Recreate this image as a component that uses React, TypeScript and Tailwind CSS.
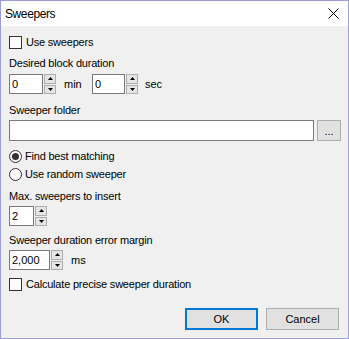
import React from "react";

const font = { fontFamily: '"Liberation Sans", Arial, sans-serif' };

function Spinner() {
  return (
    <div className="flex flex-col w-[12px] h-[20px] ml-[1px] gap-[1px]">
      <div className="flex-1 border border-[#adadad] bg-[#e5e5e5] flex items-center justify-center">
        <svg width="5" height="3" viewBox="0 0 5 3">
          <path d="M0 3 L2.5 0 L5 3 Z" fill="#000" />
        </svg>
      </div>
      <div className="flex-1 border border-[#adadad] bg-[#e5e5e5] flex items-center justify-center">
        <svg width="5" height="3" viewBox="0 0 5 3">
          <path d="M0 0 L2.5 3 L5 0 Z" fill="#000" />
        </svg>
      </div>
    </div>
  );
}

function NumInput({ w, value }: { w: string; value: string }) {
  return (
    <div className={`${w} h-[20px] border border-[#7a7a7a] bg-white flex items-center pl-[2px] text-[11px] text-black`}>
      {value}
    </div>
  );
}

function Checkbox({ label }: { label: string }) {
  return (
    <div className="flex items-center h-[13px]">
      <div className="w-[13px] h-[13px] border border-[#333333] bg-white" />
      <span className="ml-[4px] text-[11px] leading-[13px] tracking-[-0.2px]">{label}</span>
    </div>
  );
}

function Radio({ label, checked }: { label: string; checked?: boolean }) {
  return (
    <div className="flex items-center h-[13px]">
      <div className="w-[13px] h-[13px] rounded-full border border-[#333333] bg-white flex items-center justify-center">
        {checked && <div className="w-[7px] h-[7px] rounded-full bg-[#333333]" />}
      </div>
      <span className="ml-[3px] text-[11px] leading-[13px] tracking-[-0.2px]">{label}</span>
    </div>
  );
}

function Label({ children, className = "" }: { children: React.ReactNode; className?: string }) {
  return <div className={`text-[11px] leading-[13px] h-[13px] tracking-[-0.2px] ${className}`}>{children}</div>;
}

export default function App() {
  return (
    <div style={font} className="w-[349px] h-[339px] border border-[#9d9ddb] bg-[#f0f0f0] flex flex-col text-black">
      <div className="h-[25px] bg-white flex items-center justify-between pl-[4px] pr-[9px]">
        <span className="text-[12px] tracking-[-0.4px]">Sweepers</span>
        <svg width="11" height="11" viewBox="0 0 11 11">
          <path d="M0.5 0.5 L10.5 10.5 M10.5 0.5 L0.5 10.5" stroke="#000" strokeWidth="1" />
        </svg>
      </div>
      <div className="flex-1 flex flex-col pl-[8px] pr-[7px]">
        <div className="mt-[10px]">
          <Checkbox label="Use sweepers" />
        </div>
        <Label className="mt-[8px]">Desired block duration</Label>
        <div className="mt-[4px] flex items-center h-[20px]">
          <div className="w-[83px] flex items-center">
            <NumInput w="w-[34px]" value="0" />
            <Spinner />
            <span className="ml-[8px] text-[11px]">min</span>
          </div>
          <NumInput w="w-[33px]" value="0" />
          <Spinner />
          <span className="ml-[7px] text-[11px]">sec</span>
        </div>
        <Label className="mt-[10px]">Sweeper folder</Label>
        <div className="mt-[3px] flex h-[21px]">
          <div className="w-[305px] h-[21px] border border-[#7a7a7a] bg-white" />
          <div className="ml-[3px] w-[24px] h-[21px] border border-[#adadad] bg-[#e1e1e1] flex items-center justify-center text-[11px] leading-none pt-[1px]">
            ...
          </div>
        </div>
        <div className="mt-[9px]">
          <Radio label="Find best matching" checked />
        </div>
        <div className="mt-[5px]">
          <Radio label="Use random sweeper" />
        </div>
        <Label className="mt-[9px]">Max. sweepers to insert</Label>
        <div className="mt-[3px] flex items-center h-[20px]">
          <NumInput w="w-[25px]" value="2" />
          <Spinner />
        </div>
        <Label className="mt-[8px]">Sweeper duration error margin</Label>
        <div className="mt-[3px] flex items-center h-[20px]">
          <NumInput w="w-[41px]" value="2,000" />
          <Spinner />
          <span className="ml-[8px] text-[11px]">ms</span>
        </div>
        <div className="mt-[8px]">
          <Checkbox label="Calculate precise sweeper duration" />
        </div>
        <div className="mt-[17px] flex justify-end mr-[2px] gap-[8px]">
          <div className="w-[73px] h-[22px] border-2 border-[#0078d7] bg-[#e1e1e1] flex items-center justify-center text-[11px]">
            OK
          </div>
          <div className="w-[73px] h-[22px] border border-[#adadad] bg-[#e1e1e1] flex items-center justify-center text-[11px]">
            Cancel
          </div>
        </div>
      </div>
    </div>
  );
}
